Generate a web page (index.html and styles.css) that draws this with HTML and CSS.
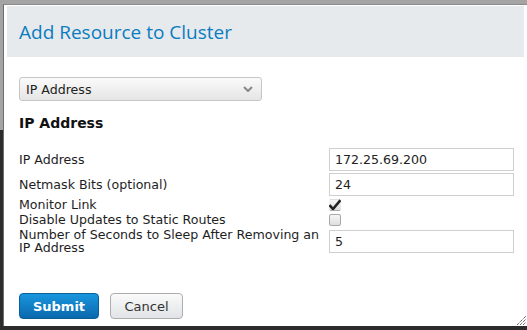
FILE: index.html
```
<!DOCTYPE html>
<html lang="en">
<head>
    <meta charset="UTF-8">
    <title>Add Resource to Cluster</title>
    <link rel="stylesheet" href="styles.css">
</head>
<body>
    <div class="dialog">
        <div class="dialog-header">
            <h1>Add Resource to Cluster</h1>
        </div>
        <form class="dialog-body" action="/" method="post">
            <select class="type-select" name="resourceType">
                <option value="ip">IP Address</option>
                <option value="fs">Filesystem</option>
                <option value="script">Script</option>
            </select>

            <h3>IP Address</h3>

            <table class="fields">
                <tr>
                    <td class="label"><label for="ipAddress">IP Address</label></td>
                    <td><input type="text" id="ipAddress" name="ipAddress" value="172.25.69.200"></td>
                </tr>
                <tr>
                    <td class="label"><label for="netmask">Netmask Bits (optional)</label></td>
                    <td><input type="text" id="netmask" name="netmask" value="24"></td>
                </tr>
                <tr class="check-row">
                    <td class="label"><label for="monitorLink">Monitor Link</label></td>
                    <td><input type="checkbox" id="monitorLink" name="monitorLink" checked></td>
                </tr>
                <tr class="check-row">
                    <td class="label"><label for="disableUpdates">Disable Updates to Static Routes</label></td>
                    <td><input type="checkbox" id="disableUpdates" name="disableUpdates"></td>
                </tr>
                <tr>
                    <td class="label"><label for="sleepTime">Number of Seconds to Sleep After Removing an IP Address</label></td>
                    <td><input type="text" id="sleepTime" name="sleepTime" value="5"></td>
                </tr>
            </table>

            <div class="buttons">
                <button type="submit" class="btn btn-primary">Submit</button>
                <button type="button" class="btn">Cancel</button>
            </div>
        </form>
        <svg class="grip" width="10" height="10" viewBox="0 0 10 10">
            <path d="M1 10 L10 1 M4 10 L10 4 M7 10 L10 7" stroke="#222" stroke-width="1" stroke-dasharray="1 1" fill="none"/>
        </svg>
    </div>
</body>
</html>
```

FILE: styles.css
```
html, body {
    margin: 0;
    height: 100%;
}
body {
    font-family: 'DejaVu Sans', Arial, sans-serif;
    font-size: 12.6px;
    color: #1e1e1e;
    background: linear-gradient(#a4a4a4 0, #a4a4a4 130px, #2c2c2c 130px);
    overflow: hidden;
}
.dialog {
    position: relative;
    box-sizing: border-box;
    margin: 4px 0 0 3px;
    height: 322px;
    padding: 1px 3px 0 3px;
    background: #fff;
    border-left: 1px solid #6e6e6e;
    border-top: 1px solid #8a8a8a;
}
.dialog-header {
    height: 51px;
    display: flex;
    align-items: center;
    padding-left: 12px;
    background: #e7eaed;
}
.dialog-header h1 {
    margin: 0;
    font-family: 'Open Sans', 'DejaVu Sans', sans-serif;
    font-size: 19px;
    font-weight: normal;
    color: #0a7cc0;
}
.dialog-body {
    padding: 20px 6px 0 12px;
}
.type-select {
    -webkit-appearance: none;
    appearance: none;
    display: block;
    width: 243px;
    height: 24px;
    padding: 0 0 0 6px;
    font-family: inherit;
    font-size: 12.6px;
    color: #222;
    border: 1px solid #c6c6c6;
    border-radius: 3px;
    background: url("data:image/svg+xml,%3Csvg xmlns='http://www.w3.org/2000/svg' width='10' height='6' viewBox='0 0 10 6'%3E%3Cpath d='M1 1 L5 5 L9 1' stroke='%23888' stroke-width='2' fill='none'/%3E%3C/svg%3E") no-repeat right 8px center,
        linear-gradient(#fafafa, #e5e5e5);
}
h3 {
    margin: 14px 0 0 0;
    font-size: 14px;
    line-height: 17px;
    font-weight: bold;
    color: #111;
}
.fields {
    margin-top: 15px;
    border-collapse: collapse;
    table-layout: fixed;
    width: 495px;
}
.fields td {
    padding: 1px 0;
    vertical-align: middle;
}
.fields td.label {
    width: 310px;
    line-height: 13px;
}
.fields label {
    display: block;
}
input[type="text"] {
    display: block;
    box-sizing: border-box;
    width: 185px;
    height: 23px;
    margin: 0;
    padding: 0 5px;
    font-family: inherit;
    font-size: 12.6px;
    color: #222;
    border: 1px solid #cfcfcf;
    border-radius: 0;
    background: #fff;
}
.check-row td {
    height: 12px;
    padding: 2px 0 1px 0;
}
.check-row td.label {
    line-height: 12px;
}
input[type="checkbox"] {
    -webkit-appearance: none;
    appearance: none;
    display: block;
    width: 12px;
    height: 12px;
    margin: 0;
    border: 1px solid #a9a9a9;
    border-radius: 2px;
    background: linear-gradient(#f6f6f6, #dedede);
}
input[type="checkbox"]:checked {
    border-color: transparent;
    border-bottom-color: #a9a9a9;
    background: url("data:image/svg+xml,%3Csvg xmlns='http://www.w3.org/2000/svg' width='14' height='12' viewBox='0 0 14 12'%3E%3Cpath d='M1.5 6 L5 10 L12.5 1' stroke='%23222' stroke-width='2.6' fill='none'/%3E%3C/svg%3E") no-repeat center / 14px 12px,
        linear-gradient(#f6f6f6, #dedede);
}
.buttons {
    display: flex;
    gap: 11px;
    margin-top: 38px;
}
.btn {
    height: 26px;
    padding: 0 12px;
    font-family: inherit;
    font-size: 13px;
    color: #333;
    border: 1px solid #adadad;
    border-radius: 4px;
    background: linear-gradient(#fafafa, #e1e3e6);
    cursor: pointer;
}
.btn-primary {
    width: 80px;
    font-weight: bold;
    color: #fff;
    border-color: #0a5f99;
    background: linear-gradient(#1896de, #0b69ad);
}
.btn + .btn {
    width: 73px;
}
.grip {
    position: absolute;
    right: 1px;
    bottom: 1px;
}
```
